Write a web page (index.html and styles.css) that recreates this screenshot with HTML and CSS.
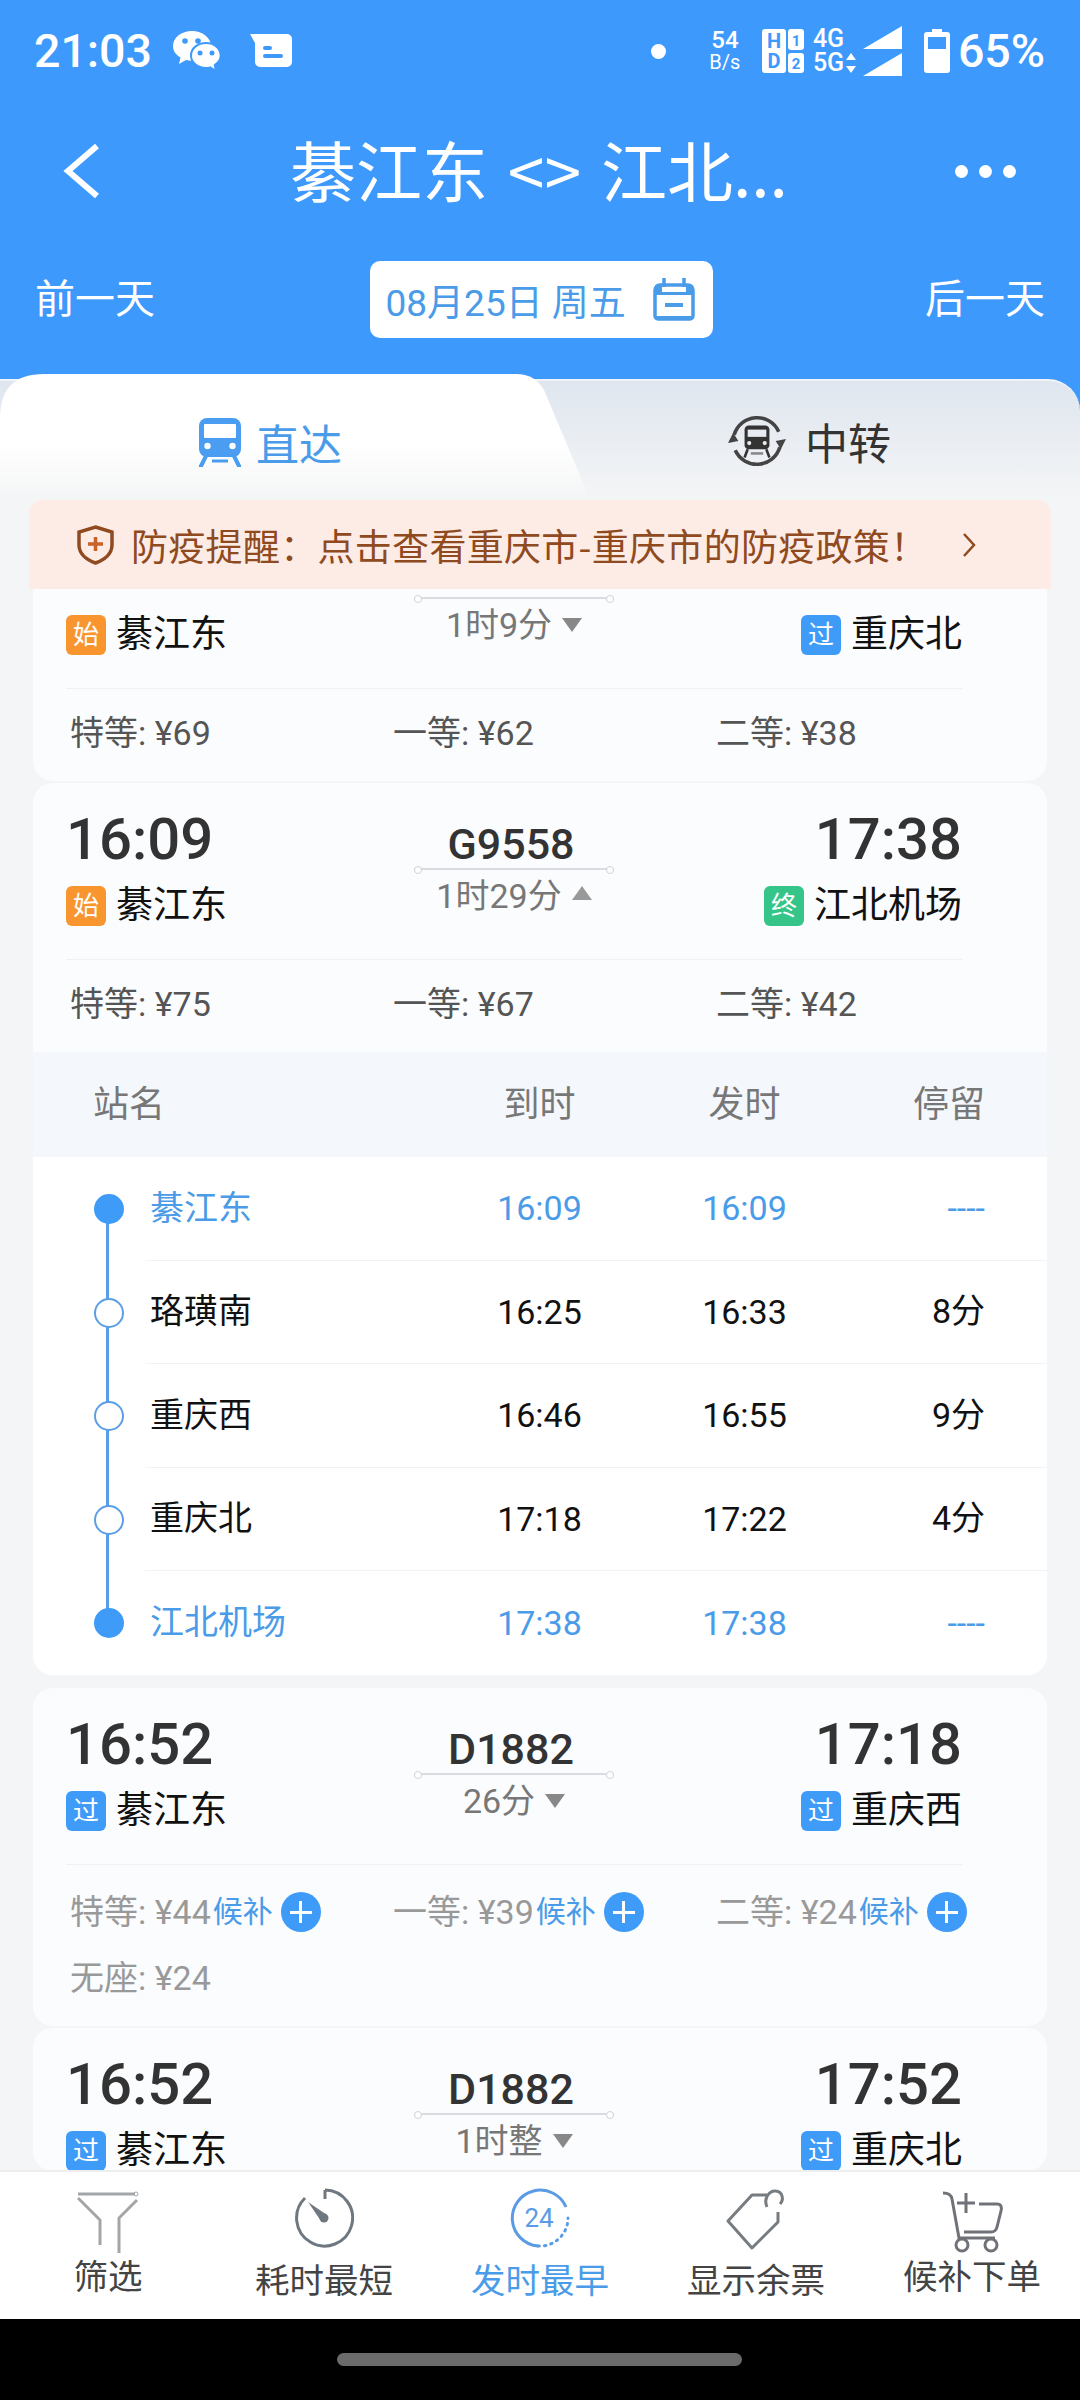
FILE: index.html
```html
<!DOCTYPE html>
<html>
<head>
    <title>綦江东 - 江北机场</title>
    <link rel="stylesheet" href="styles.css">
</head>
<body>
<div class="phone">
    <!-- Blue header -->
    <div class="top">
        <div class="status-bar">
            <span class="clock">21:03</span>
            <svg class="ic-wechat" width="48" height="40" viewBox="0 0 48 40">
                <path d="M19 0C8.500 0 0 6.500 0 15c0 5 3 9 7.500 11.500L6 33l7-4c2 .5 4 .7 6 .7 10.500 0 19-6.500 19-14.700S29.500 0 19 0z" fill="#fff"/>
                <path d="M33 12c-8.500 0-15 5.500-15 12.500S24.500 37 33 37c1.500 0 3-.2 4.300-.6L43 40l-1.300-6c3.700-2.300 6-5.600 6-9.500C47.700 17.500 41.500 12 33 12z" fill="#fff" stroke="#3e99fd" stroke-width="2"/>
                <circle cx="12" cy="10" r="2.800" fill="#3e99fd"/>
                <circle cx="25" cy="10" r="2.800" fill="#3e99fd"/>
                <circle cx="27" cy="22" r="2.500" fill="#3e99fd"/>
                <circle cx="39" cy="22" r="2.500" fill="#3e99fd"/>
            </svg>
            <svg class="ic-msg" width="42" height="34" viewBox="0 0 42 34">
                <path d="M0 0H37a5 5 0 0 1 5 5V28a5 5 0 0 1-5 5H10a5 5 0 0 1-5-5V9z" fill="#fff"/>
                <rect x="13" y="12" width="9" height="4" rx="2" fill="#3e99fd"/>
                <rect x="13" y="20" width="20" height="4" rx="2" fill="#3e99fd"/>
            </svg>
            <span class="sb-dot"></span>
            <span class="speed"><b>54</b><i>B/s</i></span>
            <svg class="ic-sim" width="42" height="44" viewBox="0 0 42 44" font-family="Roboto" font-weight="700" text-anchor="middle" fill="#3e99fd">
                <rect width="24" height="44" rx="3" fill="#fff"/>
                <rect x="26" width="16" height="21" rx="3" fill="#fff"/>
                <rect x="26" y="24" width="16" height="20" rx="3" fill="#fff"/>
                <text x="12" y="19" font-size="20">H</text>
                <text x="12" y="39" font-size="20">D</text>
                <text x="34" y="17" font-size="15">1</text>
                <text x="34" y="40" font-size="15">2</text>
            </svg>
            <span class="net"><span>4G</span><span>5G<svg width="10" height="20" viewBox="0 0 10 20"><path d="M5 0l5 7H0zM5 20l5-7H0z" fill="#fff"/></svg></span></span>
            <svg class="ic-signal" width="39" height="50" viewBox="0 0 39 50">
                <path d="M39 0V23H0zM39 27V50H0z" fill="#fff"/>
            </svg>
            <svg class="ic-battery" width="26" height="44" viewBox="0 0 26 44">
                <path d="M8 0H18V3H23a3 3 0 0 1 3 3V41a3 3 0 0 1-3 3H3a3 3 0 0 1-3-3V6a3 3 0 0 1 3-3H8z" fill="#fff"/>
                <rect x="4" y="8" width="18" height="12" fill="#3e99fd"/>
            </svg>
            <span class="percent">65%</span>
        </div>

        <div class="title-bar">
            <svg class="ic-back" width="40" height="56" viewBox="0 0 40 56">
                <path d="M35 3L6 28l29 25" fill="none" stroke="#fff" stroke-width="6"/>
            </svg>
            <div class="title">綦江东 &lt;&gt; 江北...</div>
            <div class="more"><span></span><span></span><span></span></div>
        </div>

        <div class="date-row">
            <span class="date-side">前一天</span>
            <div class="date-box">
                <span>08月25日 周五</span>
                <svg width="42" height="43" viewBox="0 0 42 43">
                    <path d="M2 12a5 5 0 0 1 5-5H35a5 5 0 0 1 5 5V38a3 3 0 0 1-3 3H5a3 3 0 0 1-3-3z" fill="none" stroke="#4a9be8" stroke-width="3.500"/>
                    <path d="M2 38h38v3H2z" fill="#4a9be8"/>
                    <path d="M2 10a4 4 0 0 1 4-4h3v8h24V6h3a4 4 0 0 1 4 4v7H2z" fill="#4a9be8"/>
                    <path d="M11 0v9M31 0v9" stroke="#4a9be8" stroke-width="3.500" fill="none"/>
                    <rect x="12" y="25" width="18" height="4" fill="#4a9be8"/>
                </svg>
            </div>
            <span class="date-side">后一天</span>
        </div>
    </div>

    <!-- Tabs -->
    <div class="tabs">
        <div class="tab tab-transfer">
            <svg width="56" height="56" viewBox="0 0 56 56">
                <path d="M6 22A23 23 0 0 1 49 19M50 34A23 23 0 0 1 7 37" fill="none" stroke="#444" stroke-width="3.500"/>
                <path d="M0 30l5-10 5 8zM56 26l-5 10-5-8z" fill="#444"/>
                <rect x="16" y="13" width="24" height="23" rx="4" fill="#333"/>
                <rect x="19" y="17" width="18" height="7" fill="#e8ecf2"/>
                <circle cx="20.500" cy="30" r="2" fill="#e8ecf2"/>
                <circle cx="35.500" cy="30" r="2" fill="#e8ecf2"/>
                <path d="M19 36l-3 8M37 36l3 8" stroke="#333" stroke-width="2.500"/>
                <path d="M22 40h12" stroke="#888" stroke-width="2.500"/>
            </svg>
            <span>中转</span>
        </div>
        <div class="tab tab-direct">
            <svg width="44" height="49" viewBox="0 0 44 49">
                <rect x="1" width="42" height="39" rx="8" fill="#4a9df0"/>
                <rect x="6" y="6" width="32" height="14" rx="1" fill="#fff"/>
                <circle cx="9.500" cy="28" r="3.200" fill="#fff"/>
                <circle cx="34.500" cy="28" r="3.200" fill="#fff"/>
                <path d="M8 38L3 48M36 38l5 10" stroke="#4a9df0" stroke-width="4" stroke-linecap="round"/>
                <path d="M14 43h16" stroke="#4a9df0" stroke-width="3"/>
            </svg>
            <span>直达</span>
        </div>
    </div>

    <div class="notice">
        <svg width="37" height="40" viewBox="0 0 37 40">
            <path d="M18.500 2L35 7V20C35 29 27 35 18.500 38 10 35 2 29 2 20V7z" fill="none" stroke="#8f4a1f" stroke-width="3.500"/>
            <path d="M18.500 12V26M11 19H26" stroke="#c8612a" stroke-width="3.500"/>
        </svg>
        <span class="notice-text">防疫提醒：点击查看重庆市-重庆市的防疫政策！</span>
        <svg class="notice-arrow" width="14" height="24" viewBox="0 0 14 24">
            <path d="M2 1l10 11L2 23" fill="none" stroke="#8f4a1f" stroke-width="2.500"/>
        </svg>
    </div>

    <!-- Train list, scrolled so the first card is partly under the notice -->
    <div class="list">
        <div class="card card-first">
            <div class="train-main">
                <div class="side">
                    <div class="time"></div>
                    <div class="station"><span class="badge badge-start">始</span>綦江东</div>
                </div>
                <div class="middle">
                    <div class="train-no"></div>
                    <div class="train-line"></div>
                    <div class="duration">1时9分<span class="tri"></span></div>
                </div>
                <div class="side side-right">
                    <div class="time"></div>
                    <div class="station"><span class="badge badge-pass">过</span>重庆北</div>
                </div>
            </div>
            <div class="divider"></div>
            <div class="prices">
                <div class="price">特等: ¥69</div>
                <div class="price">一等: ¥62</div>
                <div class="price">二等: ¥38</div>
            </div>
        </div>

        <div class="card card-open">
            <div class="train-main">
                <div class="side">
                    <div class="time">16:09</div>
                    <div class="station"><span class="badge badge-start">始</span>綦江东</div>
                </div>
                <div class="middle">
                    <div class="train-no">G9558</div>
                    <div class="train-line"></div>
                    <div class="duration">1时29分<span class="tri tri-up"></span></div>
                </div>
                <div class="side side-right">
                    <div class="time">17:38</div>
                    <div class="station"><span class="badge badge-end">终</span>江北机场</div>
                </div>
            </div>
            <div class="divider"></div>
            <div class="prices">
                <div class="price">特等: ¥75</div>
                <div class="price">一等: ¥67</div>
                <div class="price">二等: ¥42</div>
            </div>

            <div class="stops-head">
                <span>站名</span><span>到时</span><span>发时</span><span>停留</span>
            </div>
            <div class="stops">
                <div class="stop stop-on"><i class="stop-dot"></i><span class="stop-name">綦江东</span><span>16:09</span><span>16:09</span><span>----</span></div>
                <div class="stop"><i class="stop-dot"></i><span class="stop-name">珞璜南</span><span>16:25</span><span>16:33</span><span class="stop-wait">8分</span></div>
                <div class="stop"><i class="stop-dot"></i><span class="stop-name">重庆西</span><span>16:46</span><span>16:55</span><span class="stop-wait">9分</span></div>
                <div class="stop"><i class="stop-dot"></i><span class="stop-name">重庆北</span><span>17:18</span><span>17:22</span><span class="stop-wait">4分</span></div>
                <div class="stop stop-on"><i class="stop-dot"></i><span class="stop-name">江北机场</span><span>17:38</span><span>17:38</span><span>----</span></div>
            </div>
        </div>

        <div class="card">
            <div class="train-main">
                <div class="side">
                    <div class="time">16:52</div>
                    <div class="station"><span class="badge badge-pass">过</span>綦江东</div>
                </div>
                <div class="middle">
                    <div class="train-no">D1882</div>
                    <div class="train-line"></div>
                    <div class="duration">26分<span class="tri"></span></div>
                </div>
                <div class="side side-right">
                    <div class="time">17:18</div>
                    <div class="station"><span class="badge badge-pass">过</span>重庆西</div>
                </div>
            </div>
            <div class="divider"></div>
            <div class="prices">
                <div class="price sold has-wait">特等: ¥44<span class="wait">候补</span><span class="plus"></span></div>
                <div class="price sold has-wait">一等: ¥39<span class="wait">候补</span><span class="plus"></span></div>
                <div class="price sold has-wait">二等: ¥24<span class="wait">候补</span><span class="plus"></span></div>
                <div class="price sold">无座: ¥24</div>
            </div>
        </div>

        <div class="card">
            <div class="train-main">
                <div class="side">
                    <div class="time">16:52</div>
                    <div class="station"><span class="badge badge-pass">过</span>綦江东</div>
                </div>
                <div class="middle">
                    <div class="train-no">D1882</div>
                    <div class="train-line"></div>
                    <div class="duration">1时整<span class="tri"></span></div>
                </div>
                <div class="side side-right">
                    <div class="time">17:52</div>
                    <div class="station"><span class="badge badge-pass">过</span>重庆北</div>
                </div>
            </div>
        </div>
    </div>

    <!-- Bottom bar -->
    <div class="bottom-bar">
        <div class="bar-item bar-item-high">
            <svg width="64" height="66" viewBox="0 0 64 66" fill="none" stroke="#a3a6a9" stroke-width="3">
                <path d="M2 6H59M2 10L24 32V57M61 12L43 30V65"/>
                <circle cx="60" cy="6" r="2" stroke-width="1"/>
            </svg>
            <span>筛选</span>
        </div>
        <div class="bar-item">
            <svg width="60" height="62" viewBox="0 0 60 62" fill="none" stroke="#6f7880" stroke-width="3">
                <path d="M31 2A28 28 0 1 1 11 10M31 2V11"/>
                <path d="M14 14L33 27 27 33z" fill="#6f7880" stroke="none"/>
                <circle cx="30" cy="30" r="4.500" fill="#6f7880" stroke="none"/>
            </svg>
            <span>耗时最短</span>
        </div>
        <div class="bar-item bar-on">
            <svg width="60" height="62" viewBox="0 0 60 62" fill="none" stroke="#5a9be6" stroke-width="3">
                <path d="M56 19A28 28 0 1 0 28 58"/>
                <path d="M28 58A28 28 0 0 0 58 30" stroke-dasharray="1.500 5" stroke-linecap="round"/>
                <text x="29" y="39" font-family="Roboto" font-size="26" text-anchor="middle" fill="#5a9be6" stroke="none">24</text>
            </svg>
            <span>发时最早</span>
        </div>
        <div class="bar-item">
            <svg width="60" height="62" viewBox="0 0 60 62" fill="none" stroke="#777c80" stroke-width="3" stroke-linejoin="round">
                <path d="M41 7H26L2 33 26 60 52 34V24"/>
                <path d="M41 19C37 10 44 2 50 3 57 4 58 12 54 16"/>
            </svg>
            <span>显示余票</span>
        </div>
        <div class="bar-item bar-item-high">
            <svg width="62" height="66" viewBox="0 0 62 66" fill="none" stroke="#6f7378" stroke-width="3">
                <path d="M2 5C7 5 10 6 11 11L18 50H54"/>
                <path d="M38 16H56C60 16 61 19 60 23L56 39C55 43 53 44 50 44H23"/>
                <path d="M25 5V25M16 15H34"/>
                <circle cx="21" cy="57" r="6"/>
                <circle cx="50" cy="57" r="6"/>
            </svg>
            <span>候补下单</span>
        </div>
    </div>

    <div class="nav-bar"><div class="home-pill"></div></div>
</div>
</body>
</html>
```

FILE: styles.css
```css
* {
    box-sizing: border-box;
}
body {
    margin: 0;
    background-color: #f4f5f6;
    font-family: Roboto, "Noto Sans CJK SC", sans-serif;
    color: #333;
}
.phone {
    width: 1080px;
    height: 2400px;
    display: flex;
    flex-direction: column;
    overflow: hidden;
}

/* header */
.top {
    background-color: #3e99fd;
    color: #fff;
}
.status-bar {
    height: 102px;
    padding: 0 35px 0 34px;
    display: flex;
    align-items: center;
}
.clock {
    font-size: 46.5px;
    font-weight: 500;
    width: 116px;
    line-height: 50px;
}
.ic-wechat {
    margin-left: 23px;
}
.ic-msg {
    margin-left: 29px;
}
.sb-dot {
    width: 15px;
    height: 15px;
    border-radius: 50%;
    background-color: #fff;
    margin-left: auto;
}
.speed {
    width: 40px;
    margin-left: 39px;
    display: flex;
    flex-direction: column;
    align-items: center;
    line-height: 22px;
}
.speed b {
    font-size: 24px;
    font-weight: 500;
}
.speed i {
    font-size: 20px;
    font-style: normal;
}
.ic-sim {
    margin-left: 17px;
}
.net {
    width: 46px;
    margin-left: 9px;
    display: flex;
    flex-direction: column;
    font-size: 25px;
    font-weight: 500;
    line-height: 24px;
}
.net span {
    display: flex;
    align-items: center;
    gap: 2px;
}
.ic-signal {
    margin-left: 4px;
}
.ic-battery {
    margin-left: 22px;
}
.percent {
    font-size: 46.5px;
    font-weight: 500;
    margin-left: 8px;
    line-height: 50px;
}
.title-bar {
    height: 138px;
    padding: 0 64px 0 62px;
    display: grid;
    grid-template-columns: 1fr auto 1fr;
    align-items: center;
}
.title {
    font-size: 66px;
    line-height: 90px;
    word-spacing: 5px;
    margin-bottom: 6px;
    font-family: "Noto Sans CJK SC", sans-serif;
}
.more {
    display: flex;
    gap: 11px;
    justify-self: end;
}
.more span {
    width: 13px;
    height: 13px;
    border-radius: 50%;
    background-color: #fff;
}
.date-row {
    margin-top: 21px;
    padding: 0 35px 36px;
    display: flex;
    align-items: center;
    justify-content: space-between;
    font-size: 40px;
    font-family: "Noto Sans CJK SC", sans-serif;
}
.date-side {
    margin-bottom: 8px;
}
.date-box {
    width: 343px;
    height: 77px;
    margin-left: 2px;
    padding-left: 16px;
    background-color: #fff;
    border-radius: 10px;
    color: #4a9be8;
    font-size: 37px;
    display: flex;
    align-items: center;
    gap: 27px;
    font-family: Roboto, "Noto Sans CJK SC", sans-serif;
}

/* tabs */
.tabs {
    height: 126px;
    display: grid;
    background-color: #3e99fd;
    font-size: 43px;
    font-family: "Noto Sans CJK SC", sans-serif;
}
.tab {
    grid-area: 1 / 1;
    display: flex;
    align-items: center;
}
.tab-transfer {
    margin-top: 5px;
    padding: 0 0 0 728px;
    gap: 19px;
    border-top: 2px solid #f0f3f7;
    border-radius: 0 32px 0 0;
    background: linear-gradient(#dfe6ef, #f4f5f6);
    color: #333;
}
.tab-transfer svg {
    width: 58px;
    height: 58px;
}
.tab-direct {
    width: 589px;
    padding: 10px 0 0 198px;
    gap: 14px;
    background: linear-gradient(#fff 55%, #f4f5f6);
    color: #4a9be8;
    clip-path: path("M0 44Q0 0 44 0H516Q535 0 544 16L589 123V126H0Z");
}
.notice {
    margin: 0 29px;
    height: 89px;
    padding: 0 75px 0 48px;
    background-color: #fdece5;
    border-radius: 14px 14px 0 0;
    color: #8f4a1f;
    font-size: 37px;
    letter-spacing: 0.3px;
    display: flex;
    align-items: center;
    font-family: "Noto Sans CJK SC", sans-serif;
}
.notice-text {
    margin-left: 17px;
}
.notice-arrow {
    margin-left: auto;
}

/* train cards */
.list {
    flex: 1;
    min-height: 0;
    overflow: hidden;
}
.card {
    margin: 0 33px 2px;
    background-color: #fbfcfe;
    border-radius: 20px;
    overflow: hidden;
}
.card-first {
    margin-top: -77px;
}
.card-open {
    margin-bottom: 13.5px;
}
.train-main {
    padding: 24px 85px 0 33px;
    display: grid;
    grid-template-columns: 1fr 200px 1fr;
}
.time {
    height: 64px;
    font-size: 58px;
    font-weight: 500;
    line-height: 64px;
    color: #333;
}
.station {
    margin-top: 15px;
    display: flex;
    align-items: center;
    gap: 10px;
    font-size: 37px;
    line-height: 40px;
    color: #111;
}
.side-right {
    display: flex;
    flex-direction: column;
    align-items: flex-end;
}
.badge {
    width: 40px;
    height: 40px;
    border-radius: 6px;
    color: #fff;
    font-size: 26px;
    display: flex;
    align-items: center;
    justify-content: center;
}
.badge-start {
    background-color: #f9952f;
}
.badge-pass {
    background-color: #3e9bf8;
}
.badge-end {
    background-color: #35c588;
}
.middle {
    text-align: center;
}
.train-no {
    height: 48px;
    margin: 13px 6px 0 0;
    font-size: 43px;
    font-weight: 500;
    line-height: 48px;
    color: #333;
}
.train-line {
    position: relative;
    height: 2px;
    background-color: #d8dbe0;
}
.train-line::before, .train-line::after {
    content: "";
    position: absolute;
    top: -2px;
    width: 6px;
    height: 6px;
    border: 1px solid #d0d3d8;
    border-radius: 50%;
    background-color: #fff;
}
.train-line::before {
    left: 0;
}
.train-line::after {
    right: 0;
}
.duration {
    height: 46px;
    display: flex;
    align-items: center;
    justify-content: center;
    gap: 10px;
    font-size: 34px;
    color: #777;
}
.tri {
    width: 0;
    height: 0;
    margin-top: 6px;
    border-left: 10px solid transparent;
    border-right: 10px solid transparent;
    border-top: 14px solid #888;
}
.tri-up {
    margin-top: 0;
    border-top: none;
    border-bottom: 14px solid #999;
}
.divider {
    margin: 33px 85px 0 33px;
    height: 1px;
    background-color: #f0f1f3;
}
.prices {
    padding: 24px 0 28px 37px;
    display: grid;
    grid-template-columns: repeat(3, 323px);
    row-gap: 29px;
}
.price {
    height: 40px;
    padding-bottom: 6px;
    display: flex;
    align-items: center;
    font-size: 34px;
    color: #555;
    white-space: pre;
}
.sold {
    color: #999;
}
.has-wait {
    padding-bottom: 0;
}
.wait {
    margin-left: 2px;
    font-size: 30px;
    color: #4a9be8;
}
.plus {
    width: 40px;
    height: 40px;
    margin: 6px 0 0 8px;
    border-radius: 50%;
    background: linear-gradient(#fff, #fff) center / 22px 3px no-repeat,
        linear-gradient(#fff, #fff) center / 3px 22px no-repeat,
        #3e9bf8;
}

/* stops table */
.stops-head, .stop {
    display: grid;
    grid-template-columns: 1fr 205px 205px 138px;
    align-items: center;
    padding-right: 62px;
}
.stops-head {
    height: 105px;
    padding: 0 62px 8px 60px;
    background-color: #f4f8fd;
    font-size: 36px;
    color: #777;
}
.stops-head span:nth-child(2), .stops-head span:nth-child(3),
.stop span:nth-child(3), .stop span:nth-child(4) {
    text-align: center;
}
.stops-head span:last-child, .stop span:last-child {
    text-align: right;
}
.stops {
    position: relative;
    background-color: #fff;
}
.stops::before {
    content: "";
    position: absolute;
    left: 73px;
    top: 50px;
    bottom: 50px;
    width: 3px;
    background-color: #5a9fe6;
}
.stop {
    position: relative;
    height: 103.5px;
    margin-left: 112px;
    padding-left: 5px;
    border-bottom: 1px solid #f1f2f4;
    font-size: 34px;
    color: #111;
}
.stop:last-child {
    border-bottom: none;
}
.stop-name, .stop-wait {
    margin-bottom: 6px;
}
.stop-on {
    color: #4a9be8;
}
.stop-dot {
    position: absolute;
    left: -51px;
    top: 37px;
    width: 30px;
    height: 30px;
    border: 2px solid #5a9fe6;
    border-radius: 50%;
    background-color: #fff;
}
.stop-on .stop-dot {
    border: none;
    background-color: #3e9bf8;
}

/* bottom bar */
.bottom-bar {
    height: 149px;
    border-top: 2px solid #eeeeee;
    background-color: #fff;
    display: grid;
    grid-template-columns: repeat(5, 216px);
    font-family: "Noto Sans CJK SC", sans-serif;
    font-size: 34.5px;
    color: #444;
}
.bar-item {
    padding-top: 16px;
    display: flex;
    flex-direction: column;
    align-items: center;
    line-height: 46px;
}
.bar-item span {
    margin-top: 5px;
}
.bar-item-high svg {
    margin-bottom: -8px;
}
.bar-on {
    color: #4a9be8;
}
.nav-bar {
    height: 81px;
    padding-top: 34px;
    background-color: #000;
}
.home-pill {
    width: 405px;
    height: 13px;
    margin-left: 337px;
    border-radius: 7px;
    background-color: #6b6b6b;
}
```
